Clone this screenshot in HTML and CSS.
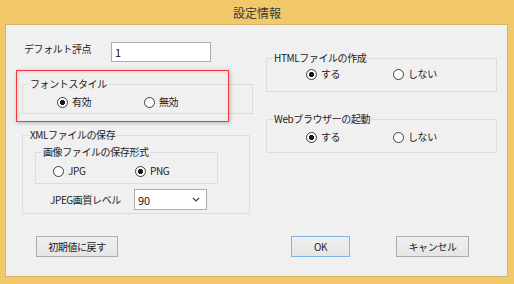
FILE: index.html
```html
<!DOCTYPE html>
<html lang="ja">
<head>
  <meta charset="UTF-8">
  <title>設定情報</title>
  <link rel="stylesheet" href="styles.css">
</head>
<body>
  <div class="window">
    <div class="titlebar">設定情報</div>
    <div class="client">
      <div class="main">
        <div class="col-left">
          <div class="field-row">
            <label class="field-label">デフォルト評点</label>
            <input class="text-input" type="text" value="1">
          </div>

          <fieldset class="group group-font">
            <legend>フォントスタイル</legend>
            <div class="options">
              <label class="option"><input type="radio" name="font" checked>有効</label>
              <label class="option"><input type="radio" name="font">無効</label>
            </div>
          </fieldset>

          <fieldset class="group group-xml">
            <legend>XMLファイルの保存</legend>
            <fieldset class="group group-image">
              <legend>画像ファイルの保存形式</legend>
              <div class="options">
                <label class="option"><input type="radio" name="img">JPG</label>
                <label class="option"><input type="radio" name="img" checked>PNG</label>
              </div>
            </fieldset>
            <div class="quality-row">
              <span class="field-label">JPEG画質レベル</span>
              <div class="select">
                <span>90</span>
                <svg width="8" height="5" viewBox="0 0 8 5"><path d="M1 1 L4 4 L7 1" fill="none" stroke="#444" stroke-width="1.2"/></svg>
              </div>
            </div>
          </fieldset>
        </div>

        <div class="col-right">
          <fieldset class="group group-html">
            <legend>HTMLファイルの作成</legend>
            <div class="options">
              <label class="option"><input type="radio" name="html" checked>する</label>
              <label class="option"><input type="radio" name="html">しない</label>
            </div>
          </fieldset>

          <fieldset class="group group-web">
            <legend>Webブラウザーの起動</legend>
            <div class="options">
              <label class="option"><input type="radio" name="web" checked>する</label>
              <label class="option"><input type="radio" name="web">しない</label>
            </div>
          </fieldset>
        </div>
      </div>

      <div class="buttons">
        <button class="btn btn-reset">初期値に戻す</button>
        <div class="btn-group">
          <button class="btn btn-ok">OK</button>
          <button class="btn btn-cancel">キャンセル</button>
        </div>
      </div>

      <!-- annotation box over the font style group -->
      <div class="highlight"></div>
    </div>
  </div>
</body>
</html>
```

FILE: styles.css
```css
* {
  margin: 0;
  padding: 0;
  box-sizing: border-box;
}
body {
  font-family: "Noto Sans CJK JP", "Noto Sans", sans-serif;
  font-size: 10px;
  color: #222;
  background: #f0c86a;
}
.window {
  width: 514px;
  height: 284px;
  background: #f1c96b;
  overflow: hidden;
}
.titlebar {
  height: 24px;
  line-height: 26px;
  text-align: center;
  font-size: 12px;
  color: #3a3a3a;
}
.client {
  position: relative;
  margin-left: 5px;
  width: 503px;
  height: 253px;
  background: #f0f0f0;
  border: 1px solid #d6b46a;
  padding-top: 17px;
  display: flex;
  flex-direction: column;
}
.main {
  display: flex;
}
.col-left {
  width: 247px;
  padding-left: 16px;
}
.col-right {
  margin-left: 13px;
  width: 231px;
}
.field-row {
  display: flex;
  align-items: flex-start;
}
.field-label {
  line-height: 14px;
  letter-spacing: -0.4px;
}
.field-row .field-label {
  margin-left: 2px;
  width: 87px;
}
.text-input {
  width: 100px;
  height: 20px;
  border: 1px solid #abadb3;
  background: #fff;
  font: inherit;
  font-size: 11px;
  color: #111;
  padding-left: 3px;
  outline: none;
}
.group {
  border: 1px solid #dcdcdc;
  padding: 0 0 0 6px;
  margin: 0;
  min-width: 0;
}
.group legend {
  padding: 0 1px;
  line-height: 14px;
  letter-spacing: -0.4px;
}
.options {
  display: flex;
}
.option {
  display: inline-flex;
  align-items: center;
  gap: 4px;
  width: 87px;
  line-height: 14px;
  letter-spacing: -0.4px;
}
.option input {
  appearance: none;
  -webkit-appearance: none;
  width: 11px;
  height: 11px;
  border: 1px solid #3c3c3c;
  border-radius: 50%;
  background: #fff;
  margin: 0;
  flex: none;
}
.option input:checked {
  background: radial-gradient(circle, #1a1a1a 0 2.3px, #fff 2.9px);
}
.group-font {
  margin-top: 15px;
  width: 231px;
}
.group-font .options {
  padding: 4px 0 4px 28px;
}
.group-xml {
  margin-top: 14px;
  width: 228px;
  padding-bottom: 3px;
}
.group-image {
  margin: 3px 0 0 6px;
  width: 183px;
}
.group-image .options {
  padding: 5px 0 5px 11px;
}
.quality-row {
  display: flex;
  align-items: center;
  margin: 5px 0 0 21px;
}
.quality-row .field-label {
  width: 84px;
}
.select {
  width: 73px;
  height: 21px;
  background: #fff;
  border: 1px solid #abadb3;
  display: flex;
  align-items: center;
  justify-content: space-between;
  padding: 0 6px 0 3px;
  font-size: 11px;
}
.group-html {
  margin-top: 9px;
}
.group-html .options {
  padding: 2px 0 10px 33px;
}
.group-web {
  margin-top: 20px;
}
.group-web .options {
  padding: 4px 0 8px 33px;
}
.buttons {
  margin-top: auto;
  margin-bottom: 19px;
  display: flex;
  padding: 0 38px 0 30px;
}
.btn-group {
  margin-left: auto;
  display: flex;
  gap: 46px;
}
.btn {
  height: 21px;
  border: 1px solid #acacac;
  background: linear-gradient(#f0f0f0, #e5e5e5);
  font: inherit;
  color: #222;
  letter-spacing: -0.4px;
}
.btn-reset {
  width: 82px;
}
.btn-ok {
  width: 59px;
  border-color: #7eb4ea;
}
.btn-cancel {
  width: 73px;
}
.highlight {
  position: absolute;
  left: 10px;
  top: 45px;
  width: 213px;
  height: 52px;
  border: 1px solid #f5383e;
  box-shadow: 1px 1px 4px rgba(0, 0, 0, 0.25), inset 1px 1px 3px rgba(0, 0, 0, 0.12);
}
```
